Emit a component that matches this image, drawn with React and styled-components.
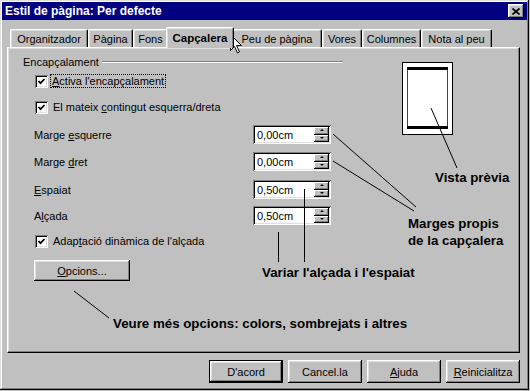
import React from "react";
import styled, { createGlobalStyle } from "styled-components";

const GlobalStyle = createGlobalStyle`
  html, body {
    margin: 0;
    padding: 0;
    background: #c0c0c0;
  }
  body {
    font-family: "Liberation Sans", Arial, sans-serif;
    font-size: 11px;
    color: #000;
  }
`;

const Window = styled.div`
  position: relative;
  box-sizing: border-box;
  width: 529px;
  height: 390px;
  padding: 2px;
  background: #c0c0c0;
  box-shadow: inset -1px -1px #000, inset 1px 1px #dfdfdf,
    inset -2px -2px #808080, inset 2px 2px #fff;
  display: flex;
  flex-direction: column;
`;

const TitleBar = styled.div`
  height: 18px;
  flex: none;
  background: #000080;
  color: #fff;
  display: flex;
  align-items: center;
  justify-content: space-between;
  padding: 0 3px;
  font-weight: bold;
  font-size: 12px;
`;

const CloseButton = styled.div`
  width: 16px;
  height: 14px;
  background: #c0c0c0;
  box-shadow: inset -1px -1px #000, inset 1px 1px #fff,
    inset -2px -2px #808080, inset 2px 2px #dfdfdf;
  display: flex;
  align-items: center;
  justify-content: center;
`;

const TabStrip = styled.div`
  margin-top: 7px;
  height: 20px;
  flex: none;
  display: flex;
  align-items: flex-end;
  padding-left: 8px;
`;

const Tab = styled.div`
  position: relative;
  box-sizing: border-box;
  flex: none;
  width: ${(p) => p.$w}px;
  height: ${(p) => (p.$active ? 21 : 18)}px;
  margin: ${(p) => (p.$active ? "0 -2px -1px -2px" : "0")};
  ${(p) => p.$active && "width: " + (p.$w + 4) + "px; z-index: 2;"}
  background: #c0c0c0;
  border-top: 1px solid #fff;
  border-left: 1px solid #fff;
  border-right: 1px solid #000;
  border-top-left-radius: 2px;
  border-top-right-radius: 2px;
  box-shadow: inset -1px 0 #808080, inset 1px 1px #dfdfdf;
  display: flex;
  align-items: center;
  justify-content: center;
  font-weight: ${(p) => (p.$active ? "bold" : "normal")};
  font-size: ${(p) => (p.$active ? "11.5px" : "11px")};
  white-space: nowrap;
`;

const Panel = styled.div`
  box-sizing: border-box;
  height: 306px;
  flex: none;
  margin: 0 7px 0 5px;
  border-top: 1px solid #fff;
  border-left: 1px solid #fff;
  border-right: 1px solid #000;
  border-bottom: 1px solid #000;
  box-shadow: inset -1px -1px #808080, inset 1px 1px #dfdfdf;
  display: flex;
`;

const FormColumn = styled.div`
  width: 335px;
  box-sizing: border-box;
  padding-left: 15px;
  display: flex;
  flex-direction: column;
`;

const GroupHeader = styled.div`
  margin-top: 7px;
  height: 14px;
  display: flex;
  align-items: center;
`;

const GroupLine = styled.div`
  flex: 1;
  margin-left: 3px;
  height: 0;
  border-top: 1px solid #808080;
  border-bottom: 1px solid #fff;
`;

const CheckRow = styled.label`
  margin-top: ${(p) => p.$mt}px;
  margin-left: 12px;
  height: 20px;
  display: flex;
  align-items: center;
  gap: 5px;
  white-space: nowrap;
`;

const CheckBox = styled.span`
  box-sizing: border-box;
  width: 13px;
  height: 13px;
  background: #fff;
  box-shadow: inset 1px 1px #808080, inset -1px -1px #fff,
    inset 2px 2px #000, inset -2px -2px #dfdfdf;
  display: flex;
  align-items: center;
  justify-content: center;
`;

const FocusText = styled.span`
  outline: 1px dotted #000;
  outline-offset: 0;
  padding: 0 1px;
  margin-left: -2px;
`;

const FieldRow = styled.div`
  margin-top: ${(p) => p.$mt}px;
  margin-left: 11px;
  height: 19px;
  display: flex;
  align-items: center;
`;

const FieldLabel = styled.span`
  width: 219px;
  white-space: nowrap;
`;

const SpinField = styled.div`
  box-sizing: border-box;
  width: 78px;
  height: 19px;
  background: #fff;
  box-shadow: inset 1px 1px #808080, inset -1px -1px #fff,
    inset 2px 2px #000, inset -2px -2px #dfdfdf;
  display: flex;
  align-items: center;
  padding: 2px 2px 2px 4px;
`;

const SpinValue = styled.span`
  flex: 1;
`;

const Spinner = styled.div`
  width: 15px;
  height: 15px;
  display: flex;
  flex-direction: column;
`;

const SpinHalf = styled.div`
  flex: 1;
  background: #c0c0c0;
  box-shadow: inset -1px -1px #000, inset 1px 1px #fff,
    inset -2px -2px #808080;
  display: flex;
  align-items: center;
  justify-content: center;
`;

const Arrow = styled.span`
  width: 0;
  height: 0;
  border-left: 2px solid transparent;
  border-right: 2px solid transparent;
  ${(p) =>
    p.$up
      ? "border-bottom: 2px solid #000; margin-top: -1px;"
      : "border-top: 2px solid #000; margin-top: -1px;"}
`;

const Button = styled.button`
  box-sizing: border-box;
  width: ${(p) => p.$w}px;
  height: ${(p) => p.$h}px;
  margin: 0;
  padding: 0;
  font-family: "Liberation Sans", Arial, sans-serif;
  font-size: 11px;
  color: #000;
  background: #c0c0c0;
  border: ${(p) => (p.$default ? "1px solid #000" : "none")};
  box-shadow: inset -1px -1px #000, inset 1px 1px #fff,
    inset -2px -2px #808080, inset 2px 2px #dfdfdf;
`;

const OptionsButton = styled(Button)`
  margin-top: 9px;
  margin-left: 11px;
`;

const PreviewColumn = styled.div`
  margin-left: 59px;
  margin-top: 14px;
`;

const ButtonRow = styled.div`
  margin-top: 7px;
  display: flex;
  justify-content: flex-end;
  gap: 5px;
  padding-right: 7px;
`;

const Callout = styled.div`
  position: absolute;
  left: ${(p) => p.$x}px;
  top: ${(p) => p.$y}px;
  font-weight: bold;
  font-size: 13.3px;
  line-height: 17px;
  white-space: nowrap;
`;

const Overlay = styled.svg`
  position: absolute;
  left: 0;
  top: 0;
  pointer-events: none;
`;

const Cursor = styled.svg`
  position: absolute;
  left: 230px;
  top: 34px;
`;

const tabs = [
  { label: "Organitzador", w: 78 },
  { label: "Pàgina", w: 45 },
  { label: "Fons", w: 35 },
  { label: "Capçalera", w: 64, active: true },
  { label: "Peu de pàgina", w: 90 },
  { label: "Vores", w: 40 },
  { label: "Columnes", w: 59 },
  { label: "Nota al peu", w: 71 },
];

const Check = () => (
  <CheckBox>
    <svg width="9" height="9" viewBox="0 0 9 9">
      <polyline points="1.5,4 3.5,6.2 7.5,2" fill="none" stroke="#000" strokeWidth="1.8" />
    </svg>
  </CheckBox>
);

const Spin = ({ value }) => (
  <SpinField>
    <SpinValue>{value}</SpinValue>
    <Spinner>
      <SpinHalf>
        <Arrow $up />
      </SpinHalf>
      <SpinHalf>
        <Arrow />
      </SpinHalf>
    </Spinner>
  </SpinField>
);

export default function App() {
  return (
    <>
      <GlobalStyle />
      <Window>
        <TitleBar>
          <span>Estil de pàgina: Per defecte</span>
          <CloseButton>
            <svg width="8" height="7" viewBox="0 0 8 7">
              <path d="M0.5 0.5 L7.5 6.5 M7.5 0.5 L0.5 6.5" stroke="#000" strokeWidth="1.6" />
            </svg>
          </CloseButton>
        </TitleBar>

        <TabStrip>
          {tabs.map((t) => (
            <Tab key={t.label} $w={t.w} $active={t.active}>
              {t.label}
            </Tab>
          ))}
        </TabStrip>

        <Panel>
          <FormColumn>
            <GroupHeader>
              <span>Encapçalament</span>
              <GroupLine />
            </GroupHeader>
            <CheckRow $mt={2}>
              <Check />
              <FocusText>
                <u>A</u>ctiva l'encapçalament
              </FocusText>
            </CheckRow>
            <CheckRow $mt={6}>
              <Check />
              <span>
                El mateix <u>c</u>ontingut esquerra/dreta
              </span>
            </CheckRow>
            <FieldRow $mt={8}>
              <FieldLabel>
                Marge <u>e</u>squerre
              </FieldLabel>
              <Spin value="0,00cm" />
            </FieldRow>
            <FieldRow $mt={8}>
              <FieldLabel>
                Marge <u>d</u>ret
              </FieldLabel>
              <Spin value="0,00cm" />
            </FieldRow>
            <FieldRow $mt={9}>
              <FieldLabel>
                <u>E</u>spaiat
              </FieldLabel>
              <Spin value="0,50cm" />
            </FieldRow>
            <FieldRow $mt={7}>
              <FieldLabel>
                A<u>l</u>çada
              </FieldLabel>
              <Spin value="0,50cm" />
            </FieldRow>
            <CheckRow $mt={6}>
              <Check />
              <span>
                Adap<u>t</u>ació dinàmica de l'alçada
              </span>
            </CheckRow>
            <OptionsButton $w={96} $h={21}>
              <u>O</u>pcions...
            </OptionsButton>
          </FormColumn>

          <PreviewColumn>
            <svg width="51" height="73" viewBox="0 0 51 73">
              <rect x="0.5" y="0.5" width="50" height="72" fill="#fff" stroke="#000" />
              <rect x="5.5" y="5.5" width="40" height="61" fill="#fff" stroke="#404040" />
              <rect x="5" y="5" width="41" height="3" fill="#000" />
              <rect x="5" y="64" width="41" height="3" fill="#000" />
            </svg>
          </PreviewColumn>
        </Panel>

        <ButtonRow>
          <Button $w={74} $h={23} $default>
            D'acord
          </Button>
          <Button $w={74} $h={23}>
            Cancel.la
          </Button>
          <Button $w={74} $h={23}>
            <u>A</u>juda
          </Button>
          <Button $w={74} $h={23}>
            <u>R</u>einicialitza
          </Button>
        </ButtonRow>

        <Overlay width="529" height="390">
          <g stroke="#000" strokeWidth="1" fill="none">
            <line x1="431" y1="108" x2="457" y2="168" />
            <line x1="333" y1="134" x2="416" y2="207" />
            <line x1="333" y1="161" x2="414" y2="211" />
            <line x1="304.5" y1="189" x2="304.5" y2="262" />
            <line x1="278.5" y1="232" x2="278.5" y2="262" />
            <line x1="74" y1="291" x2="109" y2="318" />
          </g>
        </Overlay>

        <Callout $x={435} $y={169}>Vista prèvia</Callout>
        <Callout $x={408} $y={215}>
          Marges propis
          <br />
          de la capçalera
        </Callout>
        <Callout $x={262} $y={264}>Variar l'alçada i l'espaiat</Callout>
        <Callout $x={113} $y={315}>Veure més opcions: colors, sombrejats i altres</Callout>

        <Cursor width="13" height="20" viewBox="0 0 13 20">
          <path
            d="M0.5 0.5 L0.5 16.5 L4.5 12.5 L7.5 19 L9.5 18 L6.5 11.5 L11.5 11.5 Z"
            fill="#fff"
            stroke="#000"
            strokeWidth="1"
          />
        </Cursor>
      </Window>
    </>
  );
}
